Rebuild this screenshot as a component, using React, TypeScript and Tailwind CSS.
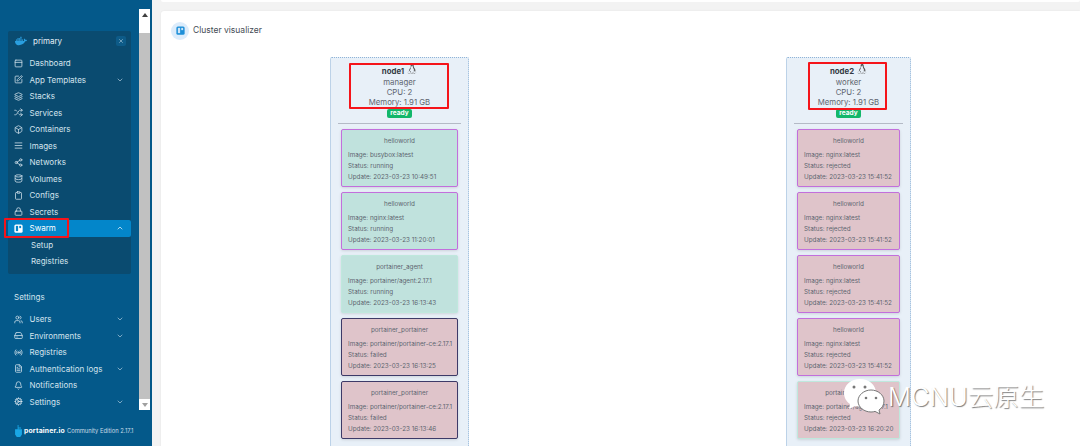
import type { ReactNode } from "react";
import {
  AlignJustify,
  Bell,
  Box,
  ChevronDown,
  ChevronUp,
  Clipboard,
  Cog,
  Database,
  FileText,
  HardDrive,
  Layers,
  Lock,
  PanelTop,
  Radio,
  Share2,
  Shuffle,
  SquarePen,
  Users,
  X,
} from "lucide-react";
import { FaDocker, FaLinux } from "react-icons/fa";

type NavItem = { label: string; icon: ReactNode; chevron?: boolean };

const ic = "h-[9px] w-[9px]";

const envItems: NavItem[] = [
  { label: "Dashboard", icon: <PanelTop className={ic} /> },
  { label: "App Templates", icon: <SquarePen className={ic} />, chevron: true },
  { label: "Stacks", icon: <Layers className={ic} /> },
  { label: "Services", icon: <Shuffle className={ic} /> },
  { label: "Containers", icon: <Box className={ic} /> },
  { label: "Images", icon: <AlignJustify className={ic} /> },
  { label: "Networks", icon: <Share2 className={ic} /> },
  { label: "Volumes", icon: <Database className={ic} /> },
  { label: "Configs", icon: <Clipboard className={ic} /> },
  { label: "Secrets", icon: <Lock className={ic} /> },
];

const settingItems: NavItem[] = [
  { label: "Users", icon: <Users className={ic} />, chevron: true },
  { label: "Environments", icon: <HardDrive className={ic} />, chevron: true },
  { label: "Registries", icon: <Radio className={ic} /> },
  { label: "Authentication logs", icon: <FileText className={ic} />, chevron: true },
  { label: "Notifications", icon: <Bell className={ic} /> },
  { label: "Settings", icon: <Cog className={ic} />, chevron: true },
];

type Task = {
  name: string;
  image: string;
  status: string;
  update: string;
  tone: "ok" | "bad";
  ring: "purple" | "navy" | "mint";
};

const node1Tasks: Task[] = [
  { name: "helloworld", image: "busybox:latest", status: "running", update: "2023-03-23 10:49:51", tone: "ok", ring: "purple" },
  { name: "helloworld", image: "nginx:latest", status: "running", update: "2023-03-23 11:20:01", tone: "ok", ring: "purple" },
  { name: "portainer_agent", image: "portainer/agent:2.17.1", status: "running", update: "2023-03-23 16:13:43", tone: "ok", ring: "mint" },
  { name: "portainer_portainer", image: "portainer/portainer-ce:2.17.1", status: "failed", update: "2023-03-23 16:13:25", tone: "bad", ring: "navy" },
  { name: "portainer_portainer", image: "portainer/portainer-ce:2.17.1", status: "failed", update: "2023-03-23 16:13:46", tone: "bad", ring: "navy" },
];

const nginxRejected: Task = {
  name: "helloworld",
  image: "nginx:latest",
  status: "rejected",
  update: "2023-03-23 15:41:52",
  tone: "bad",
  ring: "purple",
};

const node2Tasks: Task[] = [
  nginxRejected,
  nginxRejected,
  nginxRejected,
  nginxRejected,
  { name: "portainer_agent", image: "portainer/agent:2.17.1", status: "rejected", update: "2023-03-23 16:20:20", tone: "bad", ring: "mint" },
];

function SwarmIcon({ className, inner }: { className: string; inner: string }) {
  return (
    <svg viewBox="0 0 12 12" className={className}>
      <rect x="0.500" y="0.500" width="11" height="11" rx="2" fill="currentColor" />
      <rect x="2.500" y="2.500" width="3" height="7" fill={inner} />
      <rect x="7" y="2.500" width="2.500" height="3" fill={inner} />
    </svg>
  );
}

function NavRow({ item, inset }: { item: NavItem; inset?: boolean }) {
  return (
    <div className={`flex h-[16.5px] items-center text-[8px] text-[#d5e4ee] ${inset ? "pl-[6px] pr-[7px]" : "pl-[14px] pr-[7px]"}`}>
      <span className="flex w-[15.5px] shrink-0">{item.icon}</span>
      <span className="flex-1 whitespace-nowrap">{item.label}</span>
      {item.chevron && <ChevronDown className="h-[8px] w-[8px] text-[#b9d2e2]" />}
    </div>
  );
}

function Sidebar() {
  return (
    <aside className="flex h-[446px] w-[152px] shrink-0 bg-[#04598a]">
      <div className="flex w-[139px] shrink-0 flex-col pl-[8px] pr-[8px] pt-[31px]">
        <div className="h-[243px] rounded-[2px] bg-[#0a4b70]">
          <div className="flex h-[24px] items-center pb-[4px] pl-[7px] pr-[5px] text-[8px] text-[#e3eef5]">
            <FaDocker className="h-[12px] w-[12px] text-[#2a9fe0]" />
            <span className="ml-[6px] flex-1">primary</span>
            <span className="flex h-[10px] w-[10px] items-center justify-center rounded-[2px] bg-[#0d5b88]">
              <X className="h-[6px] w-[6px] text-[#cfe2ee]" />
            </span>
          </div>
          <div>
            {envItems.map((item) => (
              <NavRow key={item.label} item={item} inset />
            ))}
            <div className="flex h-[16.5px] items-center rounded-[2px] bg-[#0386ca] pl-[6px] pr-[7px] text-[8px] text-white">
              <span className="flex w-[15.5px]">
                <SwarmIcon className={ic} inner="#0386ca" />
              </span>
              <span className="flex-1">Swarm</span>
              <ChevronUp className="h-[8px] w-[8px]" />
            </div>
            <div className="flex h-[16.5px] items-center pl-[23px] text-[8px] text-[#d5e4ee]">Setup</div>
            <div className="flex h-[16.5px] items-center pl-[23px] text-[8px] text-[#d5e4ee]">Registries</div>
          </div>
        </div>
        <div className="-mx-[8px] pl-[14px] pt-[18px] text-[8px] leading-[10px] text-[#d5e4ee]">Settings</div>
        <div className="-mx-[8px] mr-0 pt-[9px]">
          {settingItems.map((item) => (
            <NavRow key={item.label} item={item} />
          ))}
        </div>
        <div className="-mx-[8px] flex items-center whitespace-nowrap pl-[15px] pt-[15px] text-[#c8dbe7]">
          <svg viewBox="0 0 8 14" className="mr-[2px] h-[12px] w-[7px] fill-[#19a7e6]">
            <path d="M3 0h1v3h3v1H4v1h4v6l-2 3H2L0 11V5h3z" />
          </svg>
          <span className="text-[6.8px] font-bold tracking-[0.2px] text-white">portainer.io</span>
          <span className="ml-[2px] text-[5.8px]">Community Edition 2.17.1</span>
        </div>
      </div>
      <div className="mt-[9px] flex h-[401px] w-[11px] shrink-0 flex-col bg-[#c1c1c1]">
        <div className="flex h-[24px] justify-center bg-white pt-[4px]">
          <div className="h-0 w-0 border-x-[3px] border-b-[4px] border-x-transparent border-b-[#404040]" />
        </div>
        <div className="flex-1" />
        <div className="flex h-[11px] justify-center bg-white pt-[4px]">
          <div className="h-0 w-0 border-x-[3px] border-t-[4px] border-x-transparent border-t-[#a0a0a0]" />
        </div>
      </div>
    </aside>
  );
}

function TaskCard({ task }: { task: Task }) {
  const bg = task.tone === "ok" ? "bg-[#c0e2dd]" : "bg-[#dfc4ca]";
  const border =
    task.ring === "purple"
      ? "border-[#c26fdc]"
      : task.ring === "navy"
        ? "border-[#3d3a68]"
        : "border-[#bfe8dd]";
  return (
    <div className={`h-[58px] rounded-[2px] border ${border} ${bg} pl-[6px] pt-[6px] text-[6.3px] leading-[11px] text-[#5d6470] shadow-[0_1px_3px_rgba(0,0,0,0.12)]`}>
      <div className="mb-[3px] pr-[6px] text-center">{task.name}</div>
      <div className="whitespace-nowrap">Image: {task.image}</div>
      <div className="whitespace-nowrap">Status: {task.status}</div>
      <div className="whitespace-nowrap">Update: {task.update}</div>
    </div>
  );
}

function NodeColumn({
  name,
  role,
  tasks,
  width,
}: {
  name: string;
  role: string;
  tasks: Task[];
  width: string;
}) {
  return (
    <div className={`${width} h-[420px] shrink-0 rounded-[2px] border border-dotted border-[#8fb4d8] bg-[#e8f0f8]`}>
      <div className="pt-[6px] text-center text-[7.8px] leading-[10px] text-[#5f6670]">
        <div className="flex items-center justify-center gap-[3px] font-bold text-[#333a44]">
          {name}
          <FaLinux className="mb-[3px] h-[10px] w-[10px] text-[#444]" />
        </div>
        <div>{role}</div>
        <div>CPU: 2</div>
        <div>Memory: 1.91 GB</div>
      </div>
      <div className="mt-[2px] flex justify-center">
        <span className="h-[9px] rounded-[2px] bg-[#12b76a] px-[3px] text-[6.5px] font-bold leading-[9px] text-white">ready</span>
      </div>
      <div className="mx-[7px] mt-[5px] border-t border-[#b4bac6]" />
      <div className="flex flex-col gap-[5px] px-[10px] pt-[5px]">
        {tasks.map((task, i) => (
          <TaskCard key={i} task={task} />
        ))}
      </div>
    </div>
  );
}

function Watermark() {
  return (
    <div className="absolute left-[843px] top-[378px] flex items-center">
      <svg viewBox="0 0 42 38" className="h-[38px] w-[42px]">
        <path d="M17 1C8 1 1 7 1 15c0 5 3 9 6 11l-1 5 6-3c2 .5 3 .6 5 .6C26 28.600 33 23 33 15S26 1 17 1z" fill="#fff" />
        <path d="M28 12c-7 0-13 5-13 11s6 11 13 11c1.500 0 3-.2 4-.6l5 2.600-1-4c3-2 5-5 5-9 0-6-6-11-13-11z" fill="#fff" stroke="#777" strokeWidth="1" />
        <circle cx="11" cy="9" r="1.500" fill="#777" />
        <circle cx="22" cy="9" r="1.500" fill="#777" />
        <circle cx="23" cy="20" r="1.300" fill="#777" />
        <circle cx="33" cy="20" r="1.300" fill="#777" />
      </svg>
      <span className="ml-[3px] whitespace-nowrap font-['Inter','Noto_Sans_CJK_SC',sans-serif] text-[25.5px] font-light leading-none text-white [text-shadow:1px_1px_1px_rgba(0,0,0,0.5)]">
        MCNU云原生
      </span>
    </div>
  );
}

export default function App() {
  return (
    <div className="relative flex h-[446px] w-[1080px] overflow-hidden bg-[#f3f3f3] font-['Inter',sans-serif]">
      <Sidebar />
      <main className="flex-1 pl-[9px]">
        <div className="h-[2px] rounded-b-[2px] bg-white" />
        <section className="mt-[9px] h-[440px] rounded-l-[3px] bg-white shadow-[0_0_2px_rgba(0,0,0,0.08)]">
          <div className="flex h-[46px] items-center pb-[7px] pl-[10px]">
            <span className="flex h-[18px] w-[18px] items-center justify-center rounded-full bg-[#dcecfb]">
              <SwarmIcon className="h-[9px] w-[9px] text-[#1d8fd8]" inner="#cfe6f8" />
            </span>
            <span className="ml-[4px] text-[8.5px] text-[#444b55]">Cluster visualizer</span>
          </div>
          <div className="flex pl-[169px]">
            <NodeColumn name="node1" role="manager" tasks={node1Tasks} width="w-[139px]" />
            <div className="w-[317px] shrink-0" />
            <NodeColumn name="node2" role="worker" tasks={node2Tasks} width="w-[125px]" />
          </div>
        </section>
      </main>

      {/* annotations on top of the screenshot */}
      <div className="absolute left-[4px] top-[218px] h-[20px] w-[65px] rounded-[1px] border-2 border-[#f5141a]" />
      <div className="absolute left-[349px] top-[63px] h-[46px] w-[100px] rounded-[1px] border-2 border-[#f5141a]" />
      <div className="absolute left-[808px] top-[62px] h-[48px] w-[79px] rounded-[1px] border-2 border-[#f5141a]" />
      <Watermark />
    </div>
  );
}
